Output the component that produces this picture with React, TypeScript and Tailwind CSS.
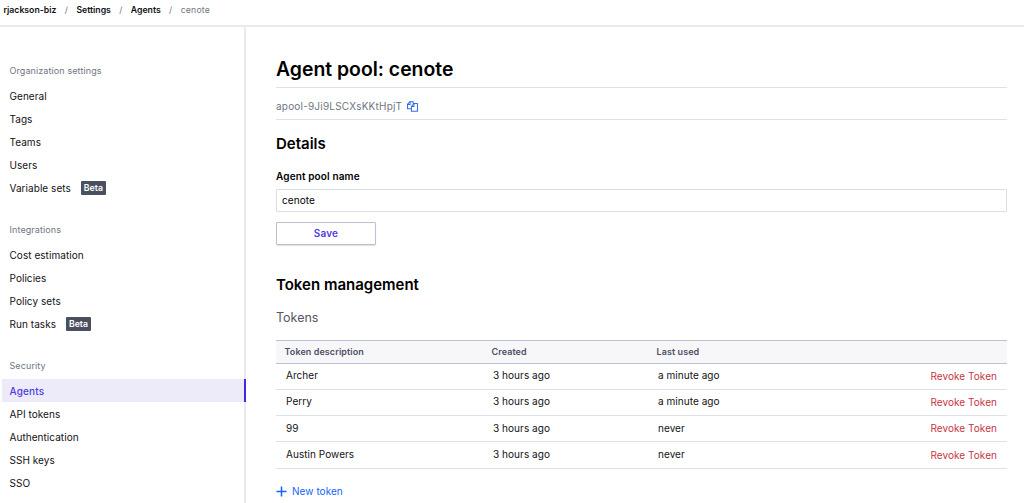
interface NavItem {
  label: string;
  beta?: boolean;
  active?: boolean;
}

interface NavSection {
  title: string;
  items: NavItem[];
}

interface Token {
  description: string;
  created: string;
  lastUsed: string;
}

const breadcrumbs = ['rjackson-biz', 'Settings', 'Agents'];

const sections: NavSection[] = [
  {
    title: 'Organization settings',
    items: [
      { label: 'General' },
      { label: 'Tags' },
      { label: 'Teams' },
      { label: 'Users' },
      { label: 'Variable sets', beta: true },
    ],
  },
  {
    title: 'Integrations',
    items: [
      { label: 'Cost estimation' },
      { label: 'Policies' },
      { label: 'Policy sets' },
      { label: 'Run tasks', beta: true },
    ],
  },
  {
    title: 'Security',
    items: [
      { label: 'Agents', active: true },
      { label: 'API tokens' },
      { label: 'Authentication' },
      { label: 'SSH keys' },
      { label: 'SSO' },
    ],
  },
];

const tokens: Token[] = [
  { description: 'Archer', created: '3 hours ago', lastUsed: 'a minute ago' },
  { description: 'Perry', created: '3 hours ago', lastUsed: 'a minute ago' },
  { description: '99', created: '3 hours ago', lastUsed: 'never' },
  { description: 'Austin Powers', created: '3 hours ago', lastUsed: 'never' },
];

function CopyIcon() {
  return (
    <svg
      width="11"
      height="11"
      viewBox="0 0 12 12"
      fill="none"
      stroke="currentColor"
      strokeWidth="1.1"
      strokeLinejoin="round"
    >
      <path d="M4.5 8.5h-4V3.6L3.2 .7h3.6v2.6" />
      <path d="M3.4 .8v3H.6" />
      <path d="M7.6 2.7h3.8v8.6H4.8V5.8z" />
      <path d="M7.6 2.8v3.1H4.9" />
    </svg>
  );
}

function Breadcrumbs() {
  return (
    <header className="flex h-[27px] items-start border-b-2 border-[#e9e9f0] pl-[3.5px] pt-1 text-[8.7px] leading-[13px]">
      {breadcrumbs.map((crumb) => (
        <div key={crumb} className="flex">
          <a href="#" className="font-semibold text-[#111114]">
            {crumb}
          </a>
          <span className="w-5 text-center text-[#6f7682]">/</span>
        </div>
      ))}
      <span className="tracking-[0.2px] text-[#6f7682]">cenote</span>
    </header>
  );
}

function SidebarItem({ label, beta, active }: NavItem) {
  return (
    <li
      className={
        active
          ? '-mr-0.5 flex h-[23px] items-center border-r-2 border-[#4328e0] bg-[#edebfa] pl-[7.5px] pt-px font-medium tracking-[0.15px] text-[#4f3be0]'
          : 'flex h-[23px] items-center pl-[7.5px] pt-px text-[#111114]'
      }
    >
      <a href="#">{label}</a>
      {beta && (
        <span className="ml-2.5 flex h-[14px] w-[25px] items-center justify-center rounded-[1px] bg-[#4b5061] pt-px text-[8.7px] font-semibold text-white">
          Beta
        </span>
      )}
    </li>
  );
}

function Sidebar() {
  return (
    <nav className="flex w-[246px] shrink-0 flex-col gap-5 border-r-2 border-[#e9e9f0] pl-0.5 pt-[33px] text-[10px] tracking-[0.05px]">
      {sections.map((section) => (
        <section key={section.title}>
          <h4 className="mb-0.5 flex h-[22px] items-center pl-[7.5px] text-[9px] tracking-[0.1px] text-[#6f7682]">
            {section.title}
          </h4>
          <ul>
            {section.items.map((item) => (
              <SidebarItem key={item.label} {...item} />
            ))}
          </ul>
        </section>
      ))}
    </nav>
  );
}

function TokenTable() {
  return (
    <table className="mt-[14px] w-full table-fixed border-collapse text-left">
      <colgroup>
        <col className="w-[207px]" />
        <col className="w-[165px]" />
        <col />
        <col className="w-[120px]" />
      </colgroup>
      <thead>
        <tr className="h-[22.5px] border-y border-[#bfc3d1] bg-[#f7f7fa] text-[9px] tracking-[0.08px] text-[#4b5061]">
          <th className="p-0 pl-[8.5px] font-semibold">Token description</th>
          <th className="p-0 pl-[8.5px] font-semibold">Created</th>
          <th className="p-0 pl-[8.5px] font-semibold">Last used</th>
          <th />
        </tr>
      </thead>
      <tbody>
        {tokens.map((token) => (
          <tr
            key={token.description}
            className="h-[26.3px] border-b border-[#dfe1e8] text-[10px] tracking-[0.05px] text-[#111114]"
          >
            <td className="p-0 pb-px pl-2.5">{token.description}</td>
            <td className="p-0 pb-px pl-2.5">{token.created}</td>
            <td className="p-0 pb-px pl-2.5">{token.lastUsed}</td>
            <td className="p-0 pr-2.5 text-right text-[#c73445]">Revoke Token</td>
          </tr>
        ))}
      </tbody>
    </table>
  );
}

export default function App() {
  return (
    <div className="flex h-[503px] flex-col overflow-hidden bg-white font-['Inter',sans-serif] text-[10px] text-black">
      <Breadcrumbs />
      <div className="flex min-h-0 flex-1">
        <Sidebar />
        <main className="min-w-0 flex-1 pl-[30px] pr-[17px] pt-[29px]">
          <h1 className="h-8 border-b border-[#dfe1e8] text-[19.4px] font-semibold leading-[26px]">
            Agent pool: cenote
          </h1>
          <div className="flex h-8 items-center gap-[5px] border-b border-[#dfe1e8] pt-[5px] text-[#6f7682]">
            <span className="tracking-[0.2px]">apool-9Ji9LSCXsKKtHpjT</span>
            <button type="button" className="text-[#2f6bf2]">
              <CopyIcon />
            </button>
          </div>

          <h2 className="mt-[14px] text-[15px] font-semibold leading-5">Details</h2>
          <label className="mt-[15px] block font-semibold leading-[14px] tracking-[0.13px]">
            Agent pool name
          </label>
          <input
            type="text"
            defaultValue="cenote"
            className="mt-1.5 block h-[23px] w-full rounded-[1px] border border-[#dcdee6] px-[5px] pb-0.5 text-[10px] tracking-[0.1px]"
          />
          <button
            type="button"
            className="mt-[10px] block h-[23px] w-[100px] rounded-[1px] border border-[#bac1cc] font-semibold tracking-[0.15px] text-[#4f3be0] shadow-[0_1px_1px_#dddfe5]"
          >
            Save
          </button>

          <h2 className="mt-[30px] text-[15px] font-semibold leading-5">Token management</h2>
          <h3 className="mt-[15px] text-[12.5px] leading-4 text-[#525761]">Tokens</h3>
          <TokenTable />
          <button type="button" className="mt-[15px] flex items-center gap-[5px] text-[#1563ff]">
            <svg width="11" height="11" viewBox="0 0 11 11" stroke="currentColor" strokeWidth="1.5">
              <path d="M5.5 .5v10M.5 5.5h10" />
            </svg>
            <span className="tracking-[0.05px]">New token</span>
          </button>
        </main>
      </div>
    </div>
  );
}
